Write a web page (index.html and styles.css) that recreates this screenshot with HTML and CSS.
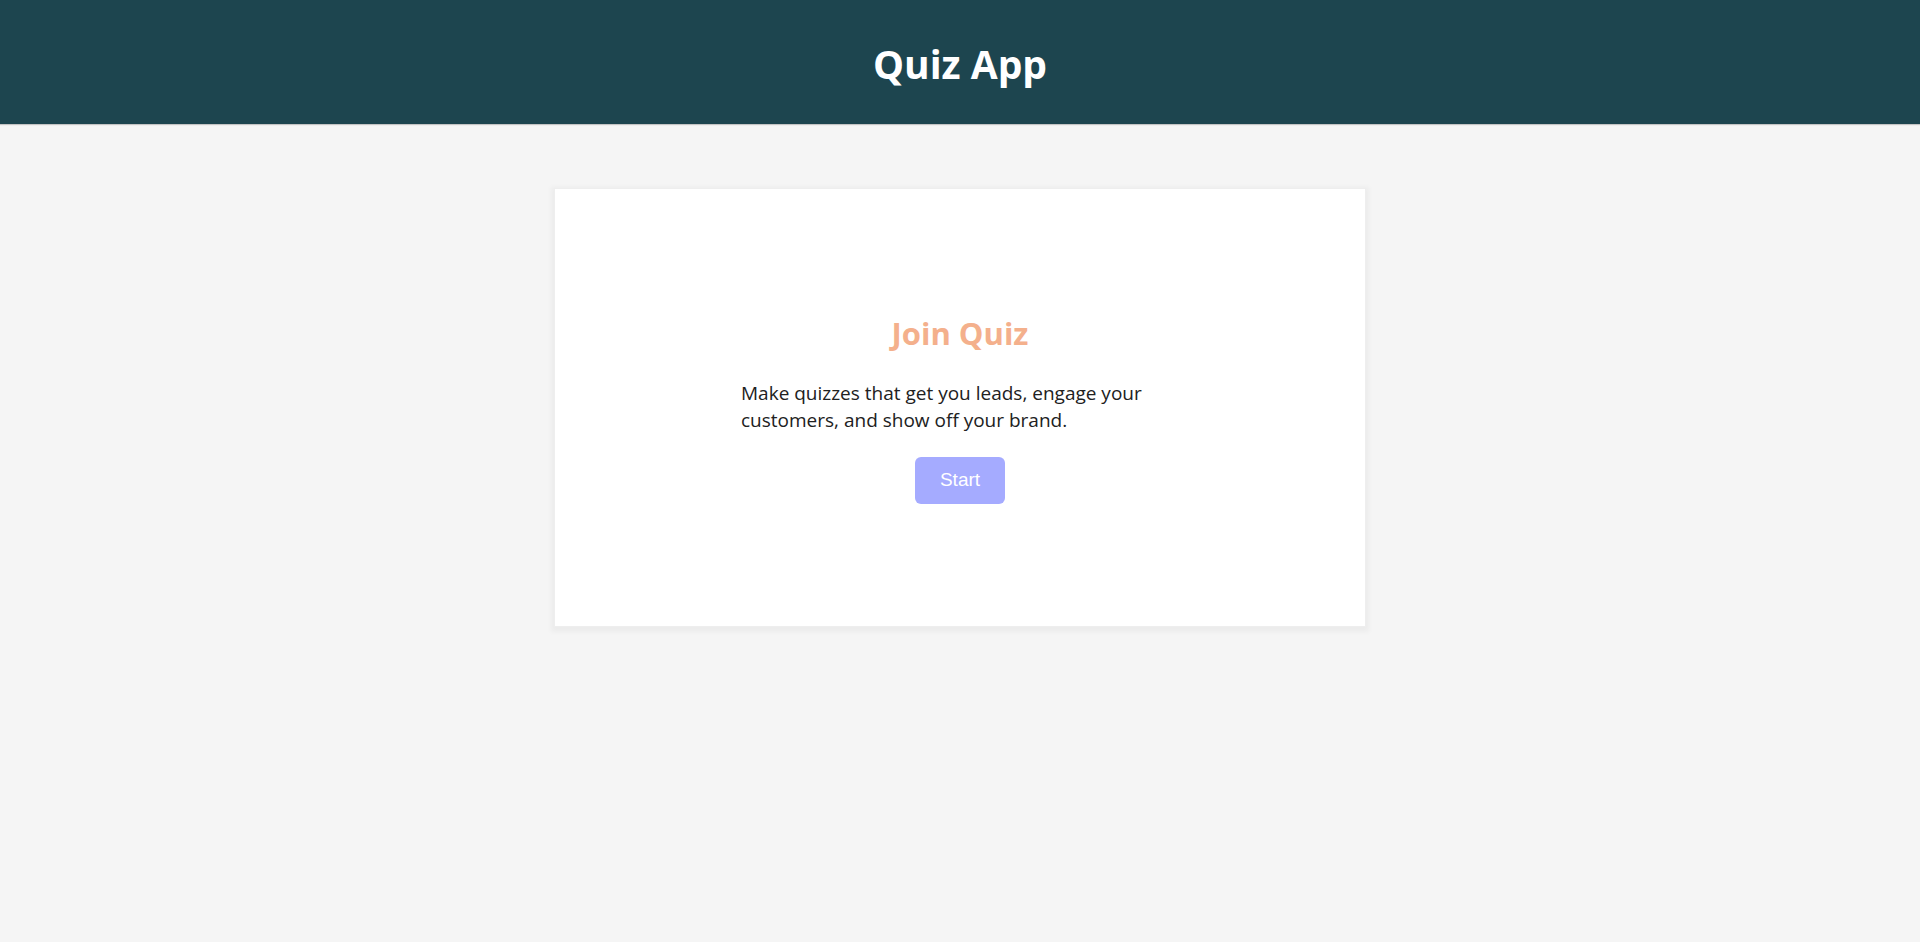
FILE: index.html
```html
<!DOCTYPE html>
<html lang="en">
<head>
<meta charset="utf-8">
<meta name="viewport" content="width=device-width, initial-scale=1">
<title>Quiz App</title>
<link rel="stylesheet" href="styles.css">
</head>
<body>
<header class="header"><h1 class="title">Quiz App</h1></header>
<main class="main">
<section class="card">
<h2 class="card-title">Join Quiz</h2>
<p class="card-text">Make quizzes that get you leads, engage your customers, and show off your brand.</p>
<button class="start" type="button">Start</button>
</section>
</main>
</body>
</html>
```
FILE: styles.css
```css
* { box-sizing: border-box; }
body {
  margin: 0;
  background: #f5f5f5;
  color: #212121;
  font-family: "Segoe UI", "Open Sans", "Noto Sans", sans-serif;
}
.header {
  padding: 34px 16px 30px;
  background: #1d454f;
  box-shadow: 0 1px 1px rgba(0, 0, 0, 0.2);
  text-align: center;
}
.title {
  margin: 0;
  color: #fff;
  font-size: 39px;
  line-height: 60px;
}
.main { padding: 64px 16px; }
.card {
  display: flex;
  flex-direction: column;
  align-items: center;
  max-width: 812px;
  margin: 0 auto;
  padding: 123px 16px 122px;
  border: 1px solid #eee;
  background: #fff;
  box-shadow: 0 2px 5px 3px rgba(0, 0, 0, 0.04);
}
.card-title {
  margin: 0 0 26px;
  color: #f4b08c;
  font-size: 31px;
  line-height: 42px;
}
.card-text {
  max-width: 438px;
  margin: 0 0 23px;
  font-size: 19px;
  line-height: 27px;
}
.start {
  padding: 11px 25px 13px;
  border: 0;
  border-radius: 6px;
  background: #a5abff;
  color: #fff;
  font: 19px/23px "Liberation Sans", Arial, sans-serif;
}
```
